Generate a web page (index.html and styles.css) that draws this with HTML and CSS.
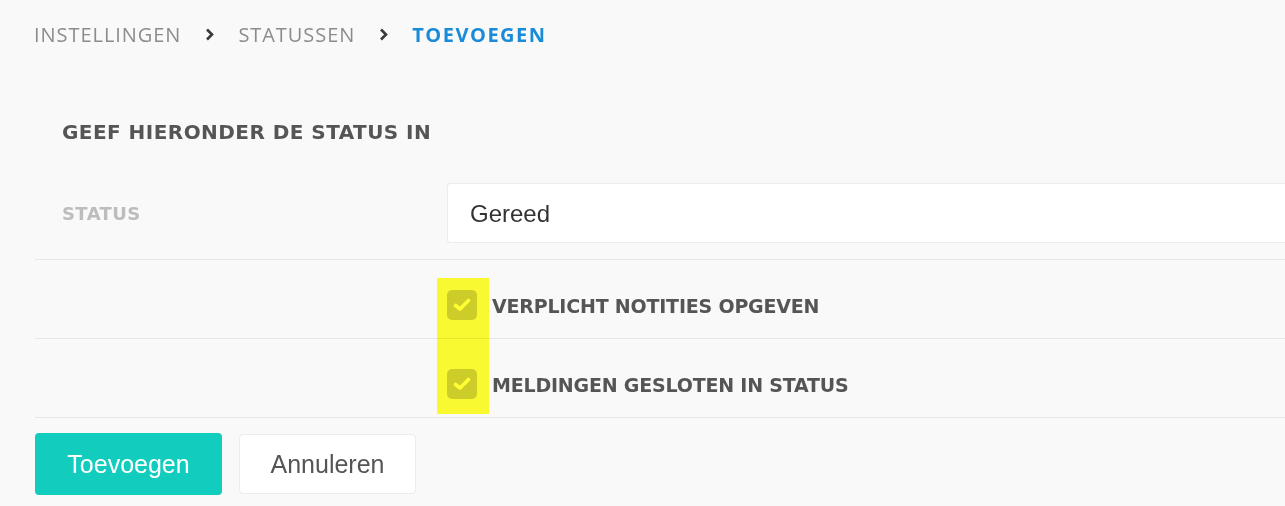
FILE: index.html
```html
<!DOCTYPE html>
<html lang="nl">
<head>
    <meta charset="UTF-8">
    <meta name="viewport" content="width=device-width, initial-scale=1.0">
    <title>Status toevoegen</title>
    <link rel="stylesheet" href="styles.css">
</head>
<body>

    <div class="breadcrumb">
        <span class="crumb">Instellingen</span>
        <svg class="chevron" width="9" height="13" viewBox="0 0 9 13"><path d="M2 1.5 L7 6.5 L2 11.5" fill="none" stroke="#3a3a3a" stroke-width="2.6"/></svg>
        <span class="crumb">Statussen</span>
        <svg class="chevron" width="9" height="13" viewBox="0 0 9 13"><path d="M2 1.5 L7 6.5 L2 11.5" fill="none" stroke="#3a3a3a" stroke-width="2.6"/></svg>
        <span class="crumb active">Toevoegen</span>
    </div>

    <div class="form">
        <h2 class="form-title">Geef hieronder de status in</h2>

        <div class="row">
            <label class="label" for="status">Status</label>
            <input class="input" id="status" type="text" value="Gereed">
        </div>

        <div class="row check-row">
            <span class="label"></span>
            <label class="check">
                <span class="box"><svg width="20" height="16" viewBox="0 0 20 16"><path d="M3.5 8.5 L8 12 L16.5 3.5" fill="none" stroke="#fff" stroke-width="3.6" stroke-linecap="round" stroke-linejoin="round"/></svg></span>
                Verplicht notities opgeven
            </label>
        </div>

        <div class="row check-row">
            <span class="label"></span>
            <label class="check">
                <span class="box"><svg width="20" height="16" viewBox="0 0 20 16"><path d="M3.5 8.5 L8 12 L16.5 3.5" fill="none" stroke="#fff" stroke-width="3.6" stroke-linecap="round" stroke-linejoin="round"/></svg></span>
                Meldingen gesloten in status
            </label>
        </div>

        <div class="actions">
            <button class="btn btn-primary">Toevoegen</button>
            <button class="btn btn-default">Annuleren</button>
        </div>

        <!-- markering over de vinkjes -->
        <div class="highlight"></div>
    </div>

</body>
</html>
```

FILE: styles.css
```css
body {
    margin: 0;
    background-color: #f9f9f9;
    font-family: "Open Sans", sans-serif;
    color: #555;
}

.breadcrumb {
    display: flex;
    align-items: center;
    height: 68px;
    padding-left: 34px;
}

.crumb {
    text-transform: uppercase;
    font-size: 20px;
    color: #8c8c8c;
    letter-spacing: 0.95px;
}

.crumb.active {
    color: #1a8bd8;
    font-weight: 700;
    letter-spacing: 1.5px;
}

.chevron {
    margin: 0 24px;
}

.form {
    position: relative;
    margin-left: 35px;
}

.form-title {
    margin: 0;
    height: 99px;
    padding: 58px 0 30px 27px;
    box-sizing: border-box;
    display: flex;
    align-items: center;
    font-family: "DejaVu Sans", sans-serif;
    font-size: 20px;
    font-weight: 700;
    letter-spacing: 0.45px;
    text-transform: uppercase;
    color: #555;
}

.row {
    display: flex;
    align-items: center;
    padding: 16px 0;
    border-bottom: 1px solid #e6e6e6;
}

.label {
    width: 412px;
    flex-shrink: 0;
    padding-left: 27px;
    box-sizing: border-box;
    font-family: "DejaVu Sans", sans-serif;
    font-weight: 700;
    font-size: 18px;
    letter-spacing: 0.4px;
    text-transform: uppercase;
    color: #bdbdbd;
}

.input {
    flex: 1;
    height: 60px;
    box-sizing: border-box;
    border: 1px solid #ececec;
    border-right: none;
    border-radius: 3px 0 0 3px;
    background: #fff;
    padding: 2px 22px 0;
    font-family: "Liberation Sans", Arial, sans-serif;
    font-size: 24px;
    color: #333;
}

.check-row {
    padding: 30px 0 18px;
}

.check {
    display: flex;
    align-items: center;
    padding-top: 2px;
    font-family: "DejaVu Sans", sans-serif;
    font-weight: 700;
    font-size: 19px;
    letter-spacing: -0.2px;
    text-transform: uppercase;
    color: #555;
}

.box {
    width: 30px;
    height: 30px;
    margin-right: 15px;
    margin-top: -2px;
    border-radius: 5px;
    background: #cdcdcd;
    display: flex;
    align-items: center;
    justify-content: center;
}

.actions {
    display: flex;
    align-items: center;
    gap: 17px;
    padding-top: 15px;
}

.btn {
    font-family: "Liberation Sans", Arial, sans-serif;
    font-size: 25px;
    border-radius: 4px;
    cursor: pointer;
}

.btn-primary {
    width: 187px;
    height: 62px;
    background-color: #12cdbd;
    border: none;
    color: #fff;
}

.btn-default {
    width: 177px;
    height: 60px;
    background-color: #fff;
    border: 1px solid #ececec;
    color: #555;
}

.highlight {
    position: absolute;
    left: 402px;
    top: 210px;
    width: 52px;
    height: 136px;
    background: #ffff33;
    mix-blend-mode: multiply;
}
```
